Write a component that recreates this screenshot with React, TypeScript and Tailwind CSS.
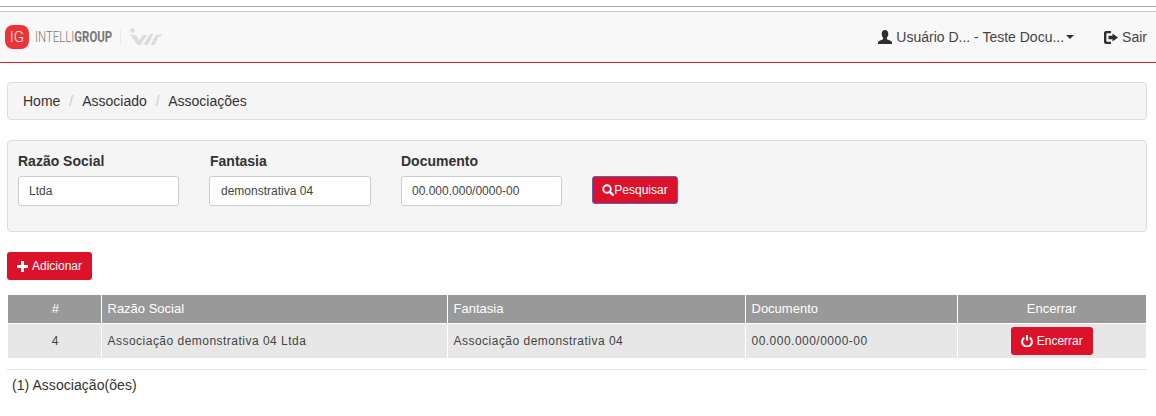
import React from "react";

function UserIcon() {
  return (
    <svg width="14" height="14" viewBox="0 0 14 14" fill="#2f2f2f" className="shrink-0">
      <path d="M7 0C9 0 10.300 1.500 10.300 3.700 10.300 5.400 9.700 6.800 8.900 7.600V9C9.200 9.700 10.500 9.900 11.800 10.500 13 11 14 11.600 14 12.600V14H0V12.600C0 11.600 1 11 2.200 10.500 3.500 9.900 4.800 9.700 5.100 9V7.600C4.300 6.800 3.700 5.400 3.700 3.700 3.700 1.500 5 0 7 0z" />
    </svg>
  );
}

function LogOutIcon() {
  return (
    <svg width="14" height="13" viewBox="0 0 14 13" fill="#2f2f2f" className="shrink-0">
      <path d="M2 0H7V2.200H3.200C2.700 2.200 2.400 2.500 2.400 3V10C2.400 10.500 2.700 10.800 3.200 10.800H7V13H2C.9 13 0 12.100 0 11V2C0 .9.900 0 2 0z" />
      <path d="M8.500 2.500L14 6.500 8.500 10.500V8.200H4.500V4.800H8.500z" />
    </svg>
  );
}

function SearchIcon() {
  return (
    <svg width="12" height="12" viewBox="0 0 12 12" fill="none" stroke="#fff" className="shrink-0">
      <circle cx="5" cy="5" r="3.800" strokeWidth="1.900" />
      <path d="M7.800 7.800L11 11" strokeWidth="2.400" strokeLinecap="round" />
    </svg>
  );
}

function PlusIcon() {
  return (
    <svg width="11" height="11" viewBox="0 0 11 11" fill="#fff" className="shrink-0 mr-[4px]">
      <path d="M4 0H7V4H11V7H7V11H4V7H0V4H4z" />
    </svg>
  );
}

function PowerIcon() {
  return (
    <svg width="12" height="12" viewBox="0 0 12 12" fill="none" stroke="#fff" strokeWidth="2" className="shrink-0 mr-[4px]">
      <path d="M3.300 2.600A4.900 4.900 0 1 0 8.700 2.600" />
      <path d="M6 0V5.500" />
    </svg>
  );
}

function IwLogo() {
  return (
    <svg width="32" height="18" viewBox="0 0 32 18" fill="#dcdcdc" className="shrink-0">
      <circle cx="2.500" cy="2.500" r="2.300" />
      <path d="M0 6.500L6 7.500 9.500 12.500 13 7H17L10.500 17H7.500z" />
      <path d="M13.500 17L20 6H23.500L18 17z" />
      <path d="M20.500 17L25 8.500C26 6.800 28 6.500 32 6.500L31 8.500H28.500L24.500 17z" />
    </svg>
  );
}

export default function App() {
  return (
    <div className="w-[1156px] h-[416px] overflow-hidden bg-white font-['Liberation_Sans',Arial,sans-serif] text-[14px] text-[#333]">
      <div className="h-[6px]" />
      <div className="h-[1px] bg-[#aaaaaa]" />
      <div className="h-[4px]" />
      <header className="h-[52px] bg-[#f8f8f8] border-t border-t-[#c8c8c8] border-b border-b-[#c9252f] flex items-center justify-between pl-[5px] pr-[9px]">
        <div className="flex items-center">
          <div className="w-[24px] h-[24px] rounded-[8px] bg-[#ee3338] flex items-center justify-center text-white text-[15px] font-['Roboto',sans-serif] font-light leading-none">
            IG
          </div>
          <div className="ml-[6px] w-[77px] whitespace-nowrap text-[15px] leading-none text-[#777777] origin-left scale-x-[0.76] font-['Roboto',sans-serif]">
            <span className="font-light">INTELLI</span>
            <span className="font-bold">GROUP</span>
          </div>
          <div className="ml-[8px] w-px h-[16px] bg-[#ececec]" />
          <div className="ml-[9px]">
            <IwLogo />
          </div>
        </div>
        <div className="flex items-center">
          <UserIcon />
          <span className="ml-[4px] text-[#444]">Usuário D... - Teste Docu...</span>
          <span className="ml-[2px] w-0 h-0 border-x-[4px] border-x-transparent border-t-[4px] border-t-[#333]" />
          <span className="ml-[30px] flex">
            <LogOutIcon />
          </span>
          <span className="ml-[4px] text-[#444]">Sair</span>
        </div>
      </header>

      <main className="pl-[7px] pr-[9px] pt-[19px]">
        <nav className="h-[38px] bg-[#f5f5f5] border border-[#dddddd] rounded-[4px] flex items-center pl-[15px]">
          <span>Home</span>
          <span className="px-[9px] text-[#cccccc]">/</span>
          <span>Associado</span>
          <span className="pl-[9px] pr-[8.5px] text-[#cccccc]">/</span>
          <span>Associações</span>
        </nav>

        <section className="mt-[20px] h-[92px] bg-[#f5f5f5] border border-[#dddddd] rounded-[4px] pl-[10px] pt-[10px] flex items-start">
          <Field label="Razão Social" value="Ltda" width="w-[161px]" />
          <Field label="Fantasia" value="demonstrativa 04" width="w-[162px]" className="ml-[30px]" nudge />
          <Field label="Documento" value="00.000.000/0000-00" width="w-[161px]" className="ml-[30px]" />
          <button className="ml-[30px] mt-[25px] h-[28px] w-[86px] rounded-[3px] bg-[#dc122b] border border-[#5b62b8] text-white text-[12px] flex items-center justify-center">
            <SearchIcon />
            Pesquisar
          </button>
        </section>

        <button className="mt-[20px] h-[28px] w-[85px] rounded-[3px] bg-[#dc122b] text-white text-[12px] flex items-center justify-center">
          <PlusIcon />
          Adicionar
        </button>

        <table className="mt-[15px] ml-px w-[1138px] table-fixed border-collapse text-[12px] tracking-[0.48px]">
          <colgroup>
            <col className="w-[93px]" />
            <col className="w-[346px]" />
            <col className="w-[298px]" />
            <col className="w-[212px]" />
            <col className="w-[189px]" />
          </colgroup>
          <thead>
            <tr className="h-[28px] bg-[#999999] text-white text-[13px] tracking-normal">
              <th className="font-normal text-center pl-[2px] border-r border-r-white">#</th>
              <th className="font-normal text-left pl-[6px] border-r border-r-white">Razão Social</th>
              <th className="font-normal text-left pl-[6px] border-r border-r-white">Fantasia</th>
              <th className="font-normal text-left pl-[6px] border-r border-r-white">Documento</th>
              <th className="font-normal text-center">Encerrar</th>
            </tr>
          </thead>
          <tbody>
            <tr className="h-[35px] bg-[#e7e7e7] text-[#444] border-t border-t-white">
              <td className="text-center pl-[2px] border-r border-r-white">4</td>
              <td className="pl-[6px] border-r border-r-white">Associação demonstrativa 04 Ltda</td>
              <td className="pl-[6px] border-r border-r-white">Associação demonstrativa 04</td>
              <td className="pl-[6px] border-r border-r-white">00.000.000/0000-00</td>
              <td>
                <button className="mx-auto h-[28px] w-[82px] rounded-[3px] bg-[#dc122b] text-white text-[12px] tracking-normal flex items-center justify-center">
                  <PowerIcon />
                  Encerrar
                </button>
              </td>
            </tr>
          </tbody>
        </table>

        <div className="mt-[11px] border-t border-t-[#e5e5e5] pt-[5px] pl-[5px] leading-[20px] tracking-[0.05px]">(1) Associação(ões)</div>
      </main>
    </div>
  );
}

function Field({ label, value, width, className = "", nudge = false }: { label: string; value: string; width: string; className?: string; nudge?: boolean }) {
  return (
    <div className={className}>
      <div className={nudge ? "font-bold leading-[20px] h-[25px] pl-px" : "font-bold leading-[20px] h-[25px]"}>{label}</div>
      <div className={`${width} h-[30px] bg-white border border-[#cccccc] rounded-[3px] ${nudge ? "pl-[11px]" : "pl-[10px]"} flex items-center text-[12px] text-[#444]`}>
        {value}
      </div>
    </div>
  );
}
